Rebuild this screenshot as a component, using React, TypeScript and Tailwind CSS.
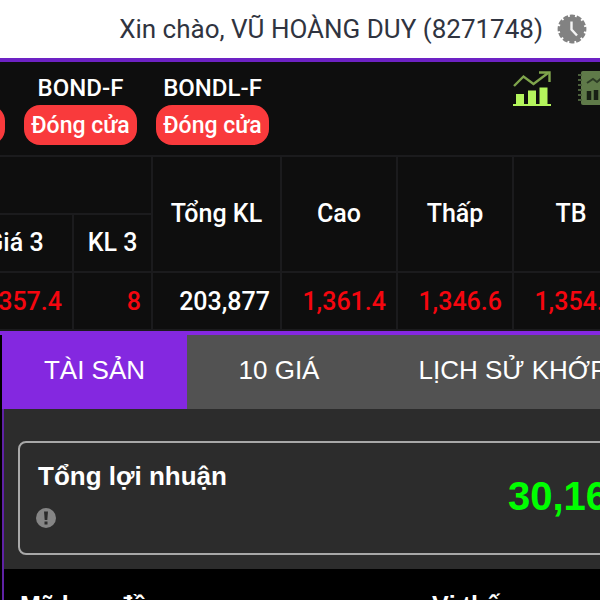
const contracts = ['', 'BOND-F', 'BONDL-F'];

const tabs = [
  { name: 'TÀI SẢN', width: 'w-[185px]' },
  { name: '10 GIÁ', width: 'w-[184px]' },
  { name: 'LỊCH SỬ KHỚP', width: 'w-[284px]' }
];

const ClockIcon = () => (
  <svg width="30" height="30" viewBox="0 0 30 30" aria-hidden="true">
    <circle cx="15" cy="15" r="12.4" fill="#828282" />
    <circle
      cx="15"
      cy="15"
      r="12.6"
      fill="none"
      stroke="#828282"
      strokeWidth="3.6"
      strokeDasharray="4.9 1.697"
      strokeDashoffset="2.45"
    />
    <path d="M14.5 7.5V15.5L20 21.5" fill="none" stroke="#f4f4f4" strokeWidth="2.4" />
  </svg>
);

const ChartIcon = () => (
  <svg width="38" height="36" viewBox="0 0 38 36" aria-hidden="true">
    <g fill="#b4f55c">
      <rect x="0" y="33" width="38" height="2" />
      <rect x="3" y="23" width="8" height="11" />
      <rect x="15" y="19.5" width="8" height="14" />
      <rect x="26.5" y="16.5" width="8" height="17" />
    </g>
    <g fill="none" stroke="#7fa44c" strokeWidth="2.4">
      <path d="M1 15L10.5 5.5L20.5 13L35 2" />
      <path d="M26 1.5H36.5V11" />
    </g>
  </svg>
);

const NotebookIcon = () => (
  <svg width="38" height="36" viewBox="0 0 38 36" aria-hidden="true">
    <rect x="3" y="0" width="33" height="34" rx="2" fill="#5f7a49" />
    <path d="M2 3V33" stroke="#4b603b" strokeWidth="4" strokeDasharray="2 3" />
    <path d="M9 12L15 8L19 11L27 4" fill="none" stroke="#2c3b25" strokeWidth="2" />
    <path d="M11 29V20M18 29V19M25 29V14" stroke="#172014" strokeWidth="4.5" />
  </svg>
);

const InfoIcon = () => (
  <svg width="20" height="20" viewBox="0 0 20 20" aria-hidden="true">
    <circle cx="10" cy="10" r="10" fill="#858585" />
    <path d="M8 3.5H12L11.3 12H8.7Z" fill="#2c2c2c" />
    <rect x="8.5" y="13.5" width="3" height="3" fill="#2c2c2c" />
  </svg>
);

const Header = () => (
  <header className="flex h-[62px] items-center justify-end gap-[14px] border-b-4 border-[#6d22c4] bg-white pr-[13px] font-[Roboto,sans-serif] text-[26px] text-[#303440]">
    <span className="whitespace-nowrap">Xin chào, VŨ HOÀNG DUY (8271748)</span>
    <button type="button" aria-label="Phiên">
      <ClockIcon />
    </button>
  </header>
);

const Contracts = () => (
  <section className="flex h-[93px] justify-between pt-[9px] font-[Roboto,sans-serif]">
    <div className="-ml-[108px] flex gap-[19px]">
      {contracts.map((name) => (
        <div key={name} className="w-[113px] text-center font-medium text-white">
          <div className="h-[34px] text-[24px] leading-[34px]">{name}</div>
          <div className="h-10 rounded-2xl bg-[#f93a3c] text-[23px] leading-[42px] whitespace-nowrap">
            Đóng cửa
          </div>
        </div>
      ))}
    </div>
    <div className="-mr-4 flex shrink-0 items-start gap-[27px]">
      <button type="button" aria-label="Biểu đồ">
        <ChartIcon />
      </button>
      <button type="button" aria-label="Báo cáo">
        <NotebookIcon />
      </button>
    </div>
  </section>
);

const head = 'border-2 border-[#1b1b1d] p-0 font-medium';
const cell = 'border-2 border-[#1b1b1d] p-0 pt-0.5 pr-[10px] text-right';

const PriceTable = () => (
  <table className="-ml-11 w-[672px] table-fixed border-collapse font-[Roboto,sans-serif] text-[25px] font-medium text-white">
    <colgroup>
      <col className="w-[116px]" />
      <col className="w-[79px]" />
      <col className="w-[129px]" />
      <col className="w-[116px]" />
      <col className="w-[116px]" />
      <col className="w-[116px]" />
    </colgroup>
    <thead>
      <tr className="h-[58px]">
        <th className={head} colSpan={2} />
        <th className={head} rowSpan={2}>Tổng KL</th>
        <th className={head} rowSpan={2}>Cao</th>
        <th className={head} rowSpan={2}>Thấp</th>
        <th className={head} rowSpan={2}>TB</th>
      </tr>
      <tr className="h-[58px]">
        <th className={head}>Giá 3</th>
        <th className={head}>KL 3</th>
      </tr>
    </thead>
    <tbody>
      <tr className="h-[58px] text-[#f5060f]">
        <td className={cell}>1,357.4</td>
        <td className={cell}>8</td>
        <td className={`${cell} text-white`}>203,877</td>
        <td className={cell}>1,361.4</td>
        <td className={cell}>1,346.6</td>
        <td className={cell}>1,354.2</td>
      </tr>
    </tbody>
  </table>
);

const AssetPanel = () => (
  <section className="border-t-4 border-[#8428e0] bg-black pl-0.5 font-['Liberation_Sans',sans-serif] text-white">
    <nav className="flex h-[74px] bg-[#525252]">
      {tabs.map(({ name, width }, i) => (
        <button
          key={name}
          type="button"
          className={`shrink-0 pb-1 text-[26px] whitespace-nowrap ${width} ${i === 0 ? 'bg-[#8428e0]' : ''}`}
        >
          {name}
        </button>
      ))}
    </nav>
    <div className="border-l-2 border-[#5f22a5]">
      <div className="bg-[#2c2c2c] pt-8 pb-[14px] pl-[14px]">
        <div className="-mr-6 flex h-[114px] items-center justify-between rounded-lg border-2 border-[#a8a8a8] pr-[14px] pb-2 pl-4">
          <div>
            <h2 className="pl-0.5 text-[26px] leading-8 font-bold">Tổng lợi nhuận</h2>
            <button type="button" aria-label="Thông tin" className="mt-4 block">
              <InfoIcon />
            </button>
          </div>
          <span className="pt-1 text-[40px] font-bold text-[#00ff00]">30,16</span>
        </div>
      </div>
      <div className="grid grid-cols-[412px_1fr] px-4 pt-4 text-[25px] leading-10 font-bold">
        <span>Mã hợp đồng</span>
        <span>Vị thế</span>
      </div>
    </div>
  </section>
);

const App = () => {
  return (
    <main className="h-screen overflow-hidden bg-[#0e0e0e]">
      <Header />
      <Contracts />
      <PriceTable />
      <AssetPanel />
    </main>
  );
};

export default App;
